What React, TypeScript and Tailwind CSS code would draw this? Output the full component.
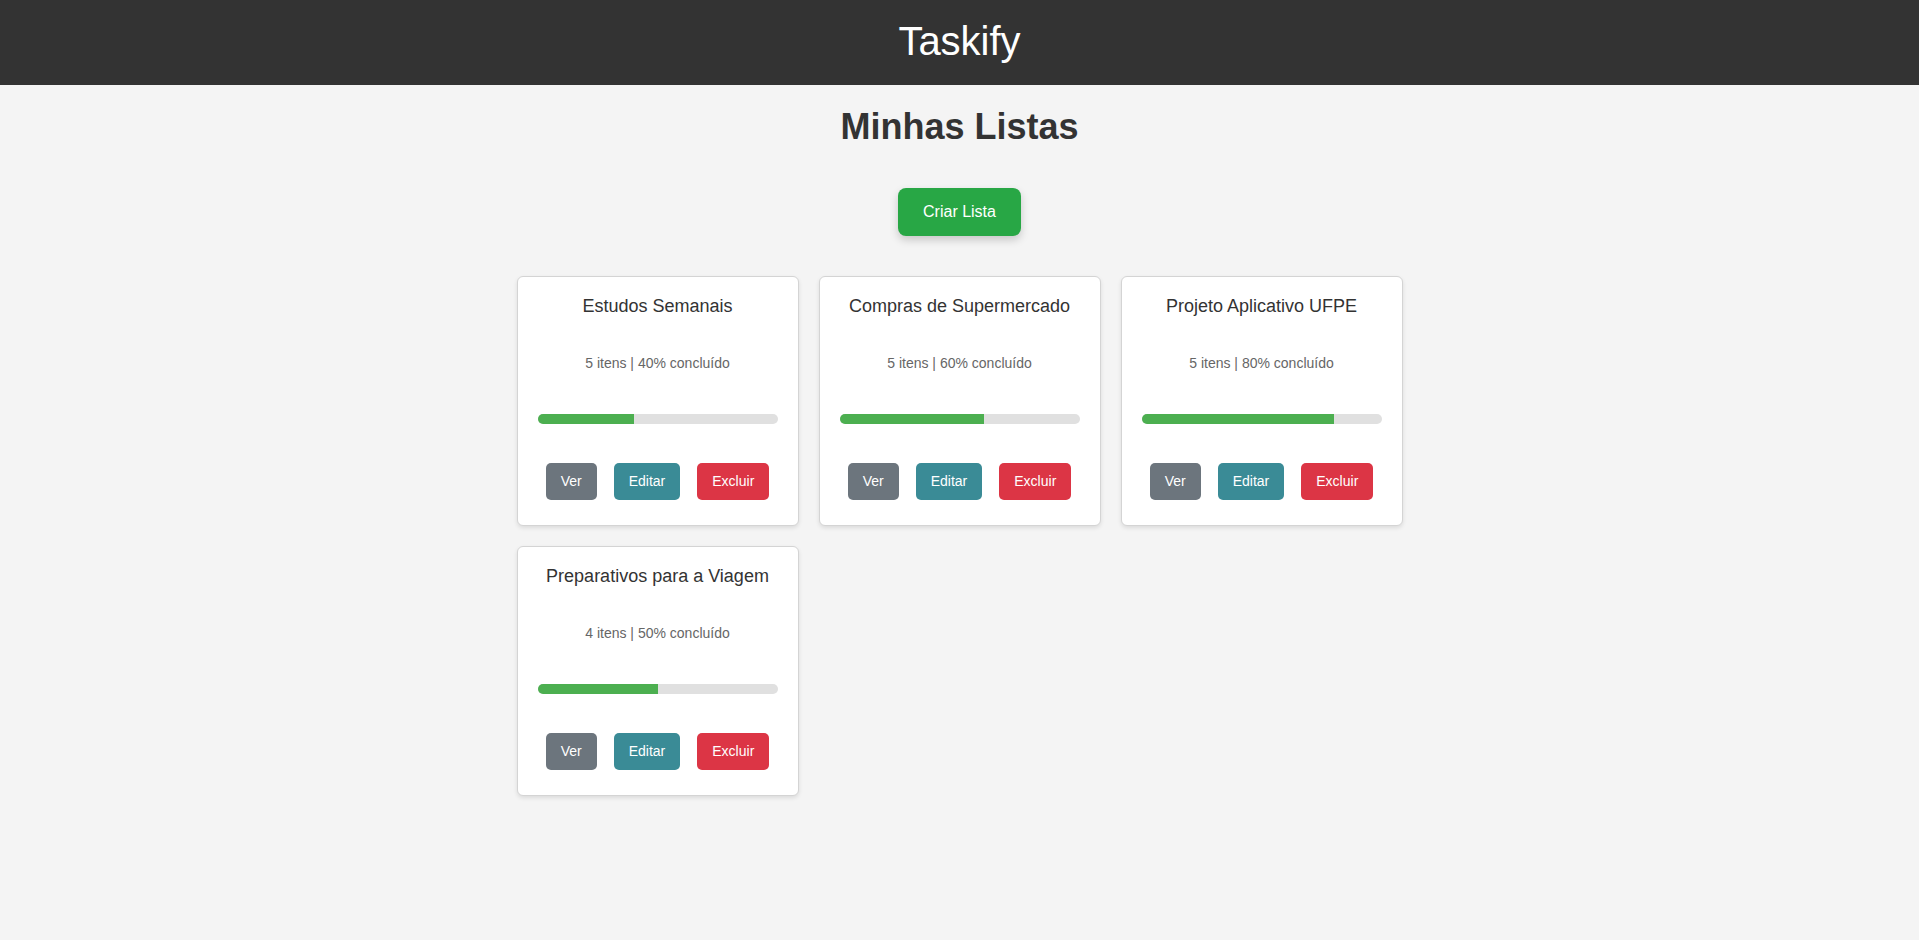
const lists = [
  { title: "Estudos Semanais", items: 5, pct: 40 },
  { title: "Compras de Supermercado", items: 5, pct: 60 },
  { title: "Projeto Aplicativo UFPE", items: 5, pct: 80 },
  { title: "Preparativos para a Viagem", items: 4, pct: 50 },
];

function ListCard({ title, items, pct }: { title: string; items: number; pct: number }) {
  return (
    <div className="flex flex-col items-center bg-white border border-[#d4d4d4] rounded-[6px] shadow-[0_2px_4px_rgba(0,0,0,0.1)] px-[20px] pt-[19px] pb-[25px]">
      <h3 className="text-[18px] leading-[21px] text-[#333]">{title}</h3>
      <p className="mt-[38px] text-[14px] leading-[16px] text-[#666]">
        {items} itens | {pct}% concluído
      </p>
      <div className="mt-[43px] w-full h-[10px] rounded-[5px] bg-[#e0e0e0] overflow-hidden">
        <div className="h-full bg-[#4caf50]" style={{ width: `${pct}%` }} />
      </div>
      <div className="mt-[39px] flex gap-[17px]">
        <button className="h-[37px] px-[15px] rounded-[5px] bg-[#6c757d] text-white text-[14px]">Ver</button>
        <button className="h-[37px] px-[15px] rounded-[5px] bg-[#3a8b96] text-white text-[14px]">Editar</button>
        <button className="h-[37px] px-[15px] rounded-[5px] bg-[#dc3545] text-white text-[14px]">Excluir</button>
      </div>
    </div>
  );
}

export default function App() {
  return (
    <div className="min-h-[940px] bg-[#f4f4f4] font-['Liberation_Sans',Arial,sans-serif]">
      {/* Header */}
      <header className="h-[85px] bg-[#333] pt-[18px] text-center">
        <h1 className="text-[40px] leading-[46px] text-white">Taskify</h1>
      </header>

      <main className="flex flex-col items-center">
        <h2 className="mt-[21px] text-[36px] leading-[41px] font-bold text-[#333]">Minhas Listas</h2>

        <button className="mt-[41px] h-[48px] px-[25px] rounded-[8px] bg-[#28a745] text-white text-[16px] shadow-[0_4px_8px_rgba(0,0,0,0.18)]">
          Criar Lista
        </button>

        <div className="mt-[40px] grid grid-cols-[repeat(3,282px)] gap-x-[20px] gap-y-[20px]">
          {lists.map((l) => (
            <ListCard key={l.title} {...l} />
          ))}
        </div>
      </main>
    </div>
  );
}
